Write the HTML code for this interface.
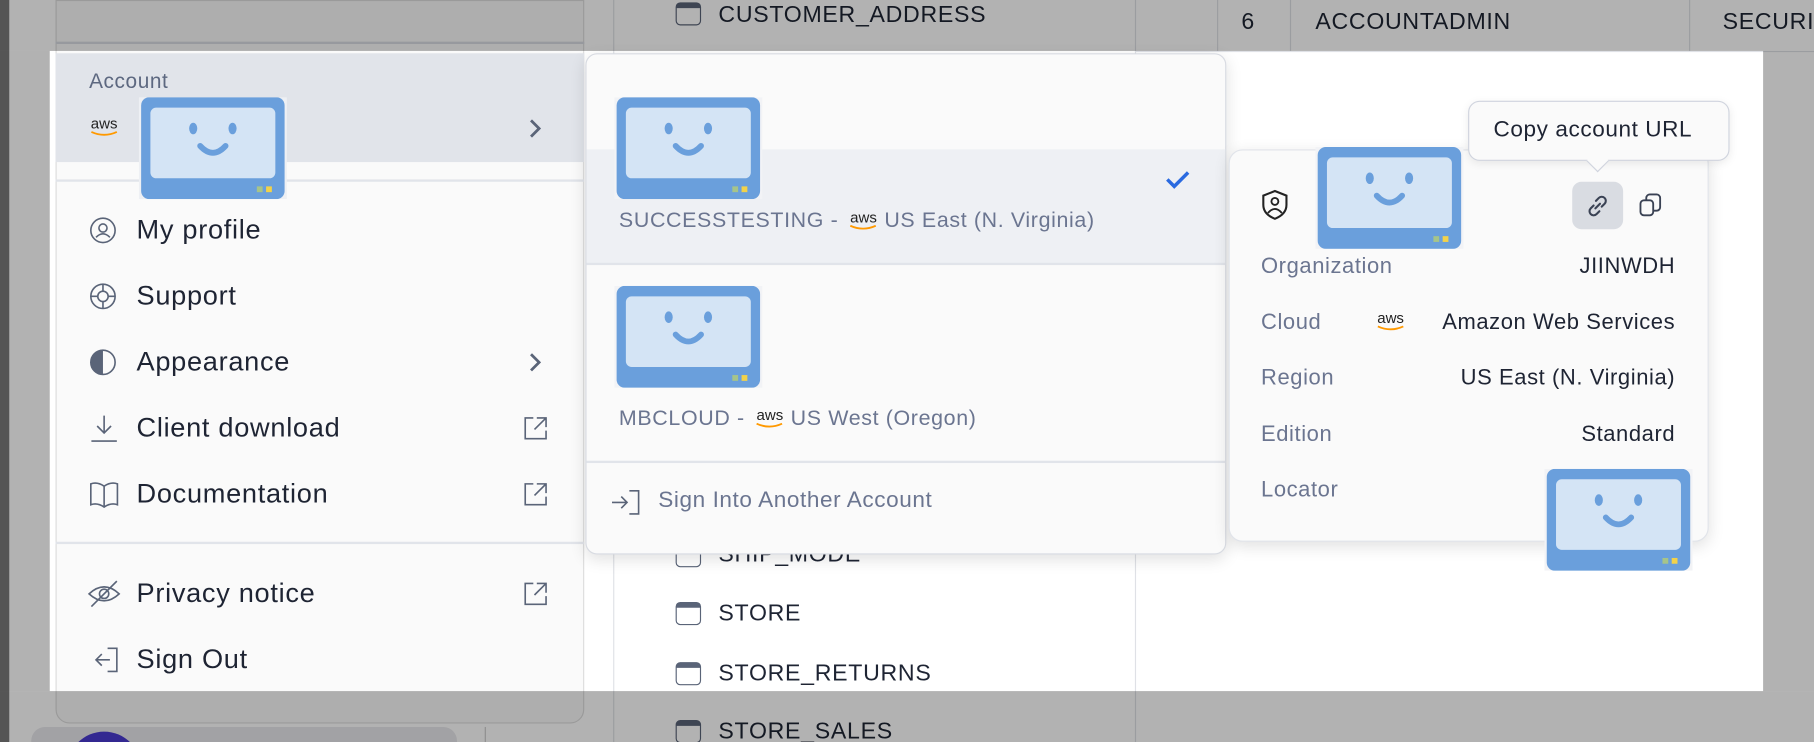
<!DOCTYPE html>
<html><head><meta charset="utf-8"><style>
*{box-sizing:border-box;margin:0;padding:0}
html,body{width:1814px;height:742px;overflow:hidden;background:#fff;font-family:"Liberation Sans",sans-serif}
#w{position:absolute;left:0;top:0;width:1568px;height:641px;transform:scale(1.15689,1.1576);transform-origin:0 0;background:#fff;overflow:hidden}
.a{position:absolute}
.t{position:absolute;white-space:nowrap}
.robot{position:absolute;width:128px;height:88px}
.mi{position:absolute;left:77px;font-size:23.5px;color:#1e2433;letter-spacing:0.6px}
.mi span{position:absolute;left:41px;top:-14px;white-space:nowrap}
.ov{position:absolute;background:rgba(0,0,0,0.3)}
.aws{position:absolute;font-size:13px;color:#222;line-height:12px;width:28px;text-align:center}
.iaws{display:inline-block;font-size:13px;color:#222;line-height:12px;width:28px;text-align:center;vertical-align:4px;letter-spacing:0;margin:0 4px 0 2px}
.iaws svg{display:block}
.row{position:absolute;left:1090px;width:358px;font-size:19px;letter-spacing:0.5px}
.row .l{position:absolute;left:0;color:#6b7590}
.row .v{position:absolute;right:0;color:#1e2433}
.sub{position:absolute;left:535px;font-size:18.5px;color:#6b7590;white-space:nowrap;letter-spacing:0.55px}
</style></head><body><div id="w">
<div class="a" style="left:0;top:0;width:8px;height:641px;background:#7a7a7a"></div>
<div class="a" style="left:48px;top:0;width:457px;height:625px;background:#fafafa;border-radius:0 0 12px 12px;border:1px solid #ddd"></div>
<div class="a" style="left:48px;top:36px;width:457px;height:2px;background:#d8dbe2"></div>
<div class="a" style="left:530px;top:0;width:1px;height:641px;background:#dfe1e6"></div>
<div class="a" style="left:981px;top:0;width:1px;height:641px;background:#dfe1e6"></div>
<div class="a" style="left:1052px;top:0;width:1px;height:44px;background:#dfe1e6"></div>
<div class="a" style="left:1115px;top:0;width:1px;height:44px;background:#dfe1e6"></div>
<div class="a" style="left:1460px;top:0;width:1px;height:44px;background:#dfe1e6"></div>
<div class="a" style="left:981px;top:44px;width:600px;height:1px;background:#dfe1e6"></div>
<div class="t" style="left:1073px;top:8px;font-size:20px;color:#1e2433">6</div>
<div class="t" style="left:1137px;top:8px;font-size:20px;color:#1e2433;letter-spacing:0.6px">ACCOUNTADMIN</div>
<div class="t" style="left:1489px;top:8px;font-size:20px;color:#1e2433;letter-spacing:0.6px">SECURITY</div>
<div class="a" style="left:584px;top:2px;width:22px;height:20px;border:1.6px solid #5a6478;border-radius:4px;border-top-width:5px"></div>
<div class="t" style="left:621px;top:2px;font-size:20px;color:#1e2433;letter-spacing:0.6px">CUSTOMER_ADDRESS</div>
<div class="a" style="left:584px;top:470px;width:22px;height:20px;border:1.6px solid #5a6478;border-radius:4px;border-top-width:5px"></div>
<div class="t" style="left:621px;top:468px;font-size:20px;color:#1e2433;letter-spacing:0.6px">SHIP_MODE</div>
<div class="a" style="left:584px;top:520px;width:22px;height:20px;border:1.6px solid #5a6478;border-radius:4px;border-top-width:5px"></div>
<div class="t" style="left:621px;top:519px;font-size:20px;color:#1e2433;letter-spacing:0.6px">STORE</div>
<div class="a" style="left:584px;top:572px;width:22px;height:20px;border:1.6px solid #5a6478;border-radius:4px;border-top-width:5px"></div>
<div class="t" style="left:621px;top:571px;font-size:20px;color:#1e2433;letter-spacing:0.6px">STORE_RETURNS</div>
<div class="a" style="left:584px;top:622px;width:22px;height:20px;border:1.6px solid #5a6478;border-radius:4px;border-top-width:5px"></div>
<div class="t" style="left:621px;top:621px;font-size:20px;color:#1e2433;letter-spacing:0.6px">STORE_SALES</div>
<div class="a" style="left:27px;top:628px;width:368px;height:30px;background:#e8e8ec;border-radius:12px"></div>
<div class="a" style="left:58px;top:632px;width:64px;height:64px;background:#4a3ad0;border-radius:50%"></div>
<div class="a" style="left:419px;top:628px;width:1px;height:20px;background:#ccc"></div>

<div class="a" style="left:48px;top:46px;width:457px;height:94px;background:#e1e4ea"></div>
<div class="t" style="left:77px;top:60px;font-size:18px;color:#5d6880;letter-spacing:0.5px">Account</div>
<div class="aws" style="left:76px;top:101px">aws<svg width="28" height="6" style="display:block"><path d="M3 1 Q14 6 25 1" stroke="#f90" stroke-width="1.6" fill="none"/></svg></div>
<svg class="a" style="left:456px;top:102px" width="14" height="18"><path d="M3 2 L10 9 L3 16" stroke="#5a6478" stroke-width="2.4" fill="none"/></svg>
<div class="a" style="left:48px;top:155px;width:457px;height:2px;background:#e1e4ea"></div>
<div class="a" style="left:48px;top:468px;width:457px;height:2px;background:#e1e4ea"></div>

<div class="mi" style="top:199px"><svg class="a" style="left:0;top:-12px" width="24" height="24"><circle cx="12" cy="12" r="10.5" stroke="#5a6478" stroke-width="1.4" fill="none"/><circle cx="12" cy="10" r="3.5" stroke="#5a6478" stroke-width="1.4" fill="none"/><path d="M6 18 Q12 12 18 18" stroke="#5a6478" stroke-width="1.4" fill="none"/></svg><span>My profile</span></div>
<div class="mi" style="top:256px"><svg class="a" style="left:0;top:-12px" width="24" height="24"><circle cx="12" cy="12" r="10.5" stroke="#5a6478" stroke-width="1.4" fill="none"/><circle cx="12" cy="12" r="4.5" stroke="#5a6478" stroke-width="1.4" fill="none"/><path d="M12 1.5V7.5M12 16.5V22.5M1.5 12H7.5M16.5 12H22.5" stroke="#5a6478" stroke-width="1.4"/></svg><span>Support</span></div>
<div class="mi" style="top:313px"><svg class="a" style="left:0;top:-12px" width="24" height="24"><circle cx="12" cy="12" r="10.5" stroke="#5a6478" stroke-width="1.4" fill="none"/><path d="M12 1.5A10.5 10.5 0 0 0 12 22.5Z" fill="#5a6478"/></svg><span>Appearance</span></div>
<svg class="a" style="left:456px;top:304px" width="14" height="18"><path d="M3 2 L10 9 L3 16" stroke="#5a6478" stroke-width="2.4" fill="none"/></svg>
<div class="mi" style="top:370px"><svg class="a" style="left:0;top:-13px" width="26" height="26"><path d="M13 2V17M7 11L13 17L19 11M2 24H24" stroke="#5a6478" stroke-width="1.4" fill="none"/></svg><span>Client download</span></div>
<div class="mi" style="top:427px"><svg class="a" style="left:0;top:-12px" width="26" height="24"><path d="M13 5Q7 1 1.5 3V21Q7 19 13 23Q19 19 24.5 21V3Q19 1 13 5ZM13 5V23" stroke="#5a6478" stroke-width="1.4" fill="none"/></svg><span>Documentation</span></div>
<div class="mi" style="top:513px"><svg class="a" style="left:-2px;top:-13px" width="30" height="26"><path d="M2 13Q15 1 28 13Q15 25 2 13Z" stroke="#5a6478" stroke-width="1.4" fill="none"/><circle cx="15" cy="13" r="4" stroke="#5a6478" stroke-width="1.4" fill="none"/><path d="M4 24L26 2" stroke="#5a6478" stroke-width="1.4"/></svg><span>Privacy notice</span></div>
<div class="mi" style="top:570px"><svg class="a" style="left:0;top:-12px" width="26" height="24"><path d="M16 2H24V22H16M11 7L6 12L11 17M6 12H18" stroke="#5a6478" stroke-width="1.4" fill="none"/></svg><span>Sign Out</span></div>
<svg class="a" style="left:451px;top:358px" width="24" height="24"><path d="M10 3H3V21H21V14M13 3H21V11M21 3L11 13" stroke="#5a6478" stroke-width="1.4" fill="none"/></svg>
<svg class="a" style="left:451px;top:415px" width="24" height="24"><path d="M10 3H3V21H21V14M13 3H21V11M21 3L11 13" stroke="#5a6478" stroke-width="1.4" fill="none"/></svg>
<svg class="a" style="left:451px;top:501px" width="24" height="24"><path d="M10 3H3V21H21V14M13 3H21V11M21 3L11 13" stroke="#5a6478" stroke-width="1.4" fill="none"/></svg>

<div class="a" style="left:506px;top:46px;width:554px;height:433px;background:#fafafa;border:1px solid #d8dbe2;border-radius:10px;box-shadow:0 4px 14px rgba(0,0,0,0.12);overflow:hidden">
 <div class="a" style="left:0;top:82px;width:554px;height:99px;background:#eef0f4"></div>
 <div class="a" style="left:0;top:180px;width:554px;height:2px;background:#e1e4ea"></div>
 <div class="a" style="left:0;top:351px;width:554px;height:2px;background:#e1e4ea"></div>
</div>
<div class="sub" style="top:179px">SUCCESSTESTING - <span class="iaws">aws<svg width="28" height="6"><path d="M3 1 Q14 6 25 1" stroke="#f90" stroke-width="1.6" fill="none"/></svg></span>US East (N. Virginia)</div>
<svg class="a" style="left:1007px;top:146px" width="22" height="18"><path d="M2 9L8 15L20 3" stroke="#2a6ae0" stroke-width="3" fill="none"/></svg>
<div class="sub" style="top:350px">MBCLOUD - <span class="iaws">aws<svg width="28" height="6"><path d="M3 1 Q14 6 25 1" stroke="#f90" stroke-width="1.6" fill="none"/></svg></span>US West (Oregon)</div>
<svg class="a" style="left:527px;top:422px" width="28" height="24"><path d="M17 2H25V22H17M2 12H15M10 7L15 12L10 17" stroke="#5a6478" stroke-width="1.4" fill="none"/></svg>
<div class="t" style="left:569px;top:421px;font-size:19.5px;color:#6b7590;letter-spacing:0.5px">Sign Into Another Account</div>

<div class="a" style="left:1062px;top:129px;width:415px;height:339px;background:#fafafa;border:1px solid #e1e4ea;border-radius:12px;box-shadow:0 4px 14px rgba(0,0,0,0.12)"></div>
<svg class="a" style="left:1089px;top:163px" width="26" height="28"><path d="M13 2L23 6V14Q23 22 13 26Q3 22 3 14V6Z" stroke="#222" stroke-width="1.8" fill="none"/><circle cx="13" cy="11" r="3" stroke="#222" stroke-width="1.6" fill="none"/><path d="M7 21Q13 14 19 21" stroke="#222" stroke-width="1.6" fill="none"/></svg>
<div class="a" style="left:1359px;top:157px;width:44px;height:41px;background:#d9dce2;border-radius:8px"></div>
<svg class="a" style="left:1369px;top:166px" width="24" height="24"><path d="M10 14L14 10M8.5 11.5L6 14A3.5 3.5 0 0 0 11 19L13.5 16.5M15.5 12.5L18 10A3.5 3.5 0 0 0 13 5L10.5 7.5" stroke="#3a4254" stroke-width="1.8" fill="none" stroke-linecap="round"/></svg>
<svg class="a" style="left:1415px;top:165px" width="24" height="24"><rect x="8" y="3" width="12" height="14" rx="3" stroke="#3a4254" stroke-width="1.6" fill="none"/><rect x="3" y="8" width="11" height="13" rx="3" stroke="#3a4254" stroke-width="1.6" fill="#fafafa"/></svg>
<div class="row" style="top:220px"><span class="l">Organization</span><span class="v">JIINWDH</span></div>
<div class="row" style="top:268px"><span class="l">Cloud</span><span class="v">Amazon Web Services</span></div>
<div class="aws" style="left:1188px;top:269px">aws<svg width="28" height="6" style="display:block"><path d="M3 1 Q14 6 25 1" stroke="#f90" stroke-width="1.6" fill="none"/></svg></div>
<div class="row" style="top:316px"><span class="l">Region</span><span class="v">US East (N. Virginia)</span></div>
<div class="row" style="top:365px"><span class="l">Edition</span><span class="v">Standard</span></div>
<div class="row" style="top:413px"><span class="l">Locator</span></div>

<div class="a" style="left:1269px;top:87px;width:226px;height:52px;background:#fafafa;border:1.5px solid #d0d4de;border-radius:10px;box-shadow:0 2px 8px rgba(0,0,0,0.08)"></div>
<div class="a" style="left:1374px;top:132px;width:14px;height:14px;background:#fafafa;border-right:1.5px solid #d0d4de;border-bottom:1.5px solid #d0d4de;transform:rotate(45deg)"></div>
<div class="t" style="left:1291px;top:101px;font-size:19.5px;color:#1e2433;letter-spacing:0.5px">Copy account URL</div>

<svg class="robot" style="left:120px;top:84px" viewBox="0 0 128 88"><rect width="128" height="88" fill="#eef0f4"/><rect x="2" y="0" width="124" height="88" rx="7" fill="#6a9fdc"/><rect x="10" y="9" width="108" height="61" rx="5" fill="#d4e4f5"/><ellipse cx="47" cy="27" rx="3.5" ry="5" fill="#6a9fdc"/><ellipse cx="81" cy="27" rx="3.5" ry="5" fill="#6a9fdc"/><path d="M53 42Q64 54 75 42" stroke="#6a9fdc" stroke-width="5" fill="none" stroke-linecap="round"/><rect x="102" y="77" width="5" height="5" fill="#a6c48a"/><rect x="110" y="77" width="5" height="5" fill="#f2d24a"/></svg>
<svg class="robot" style="left:531px;top:84px" viewBox="0 0 128 88"><rect width="128" height="88" fill="#f2f3f6"/><rect x="2" y="0" width="124" height="88" rx="7" fill="#6a9fdc"/><rect x="10" y="9" width="108" height="61" rx="5" fill="#d4e4f5"/><ellipse cx="47" cy="27" rx="3.5" ry="5" fill="#6a9fdc"/><ellipse cx="81" cy="27" rx="3.5" ry="5" fill="#6a9fdc"/><path d="M53 42Q64 54 75 42" stroke="#6a9fdc" stroke-width="5" fill="none" stroke-linecap="round"/><rect x="102" y="77" width="5" height="5" fill="#a6c48a"/><rect x="110" y="77" width="5" height="5" fill="#f2d24a"/></svg>
<svg class="robot" style="left:531px;top:247px" viewBox="0 0 128 88"><rect width="128" height="88" fill="#f2f3f6"/><rect x="2" y="0" width="124" height="88" rx="7" fill="#6a9fdc"/><rect x="10" y="9" width="108" height="61" rx="5" fill="#d4e4f5"/><ellipse cx="47" cy="27" rx="3.5" ry="5" fill="#6a9fdc"/><ellipse cx="81" cy="27" rx="3.5" ry="5" fill="#6a9fdc"/><path d="M53 42Q64 54 75 42" stroke="#6a9fdc" stroke-width="5" fill="none" stroke-linecap="round"/><rect x="102" y="77" width="5" height="5" fill="#a6c48a"/><rect x="110" y="77" width="5" height="5" fill="#f2d24a"/></svg>
<svg class="robot" style="left:1137px;top:127px" viewBox="0 0 128 88"><rect width="128" height="88" fill="#f2f3f6"/><rect x="2" y="0" width="124" height="88" rx="7" fill="#6a9fdc"/><rect x="10" y="9" width="108" height="61" rx="5" fill="#d4e4f5"/><ellipse cx="47" cy="27" rx="3.5" ry="5" fill="#6a9fdc"/><ellipse cx="81" cy="27" rx="3.5" ry="5" fill="#6a9fdc"/><path d="M53 42Q64 54 75 42" stroke="#6a9fdc" stroke-width="5" fill="none" stroke-linecap="round"/><rect x="102" y="77" width="5" height="5" fill="#a6c48a"/><rect x="110" y="77" width="5" height="5" fill="#f2d24a"/></svg>
<svg class="robot" style="left:1335px;top:405px" viewBox="0 0 128 88"><rect width="128" height="88" fill="#f2f3f6"/><rect x="2" y="0" width="124" height="88" rx="7" fill="#6a9fdc"/><rect x="10" y="9" width="108" height="61" rx="5" fill="#d4e4f5"/><ellipse cx="47" cy="27" rx="3.5" ry="5" fill="#6a9fdc"/><ellipse cx="81" cy="27" rx="3.5" ry="5" fill="#6a9fdc"/><path d="M53 42Q64 54 75 42" stroke="#6a9fdc" stroke-width="5" fill="none" stroke-linecap="round"/><rect x="102" y="77" width="5" height="5" fill="#a6c48a"/><rect x="110" y="77" width="5" height="5" fill="#f2d24a"/></svg>

<div class="ov" style="left:0;top:0;width:1568px;height:44px"></div>
<div class="ov" style="left:0;top:597px;width:1568px;height:44px"></div>
<div class="ov" style="left:0;top:44px;width:43px;height:553px"></div>
<div class="ov" style="left:1524px;top:44px;width:44px;height:553px"></div>
</div></body></html>
